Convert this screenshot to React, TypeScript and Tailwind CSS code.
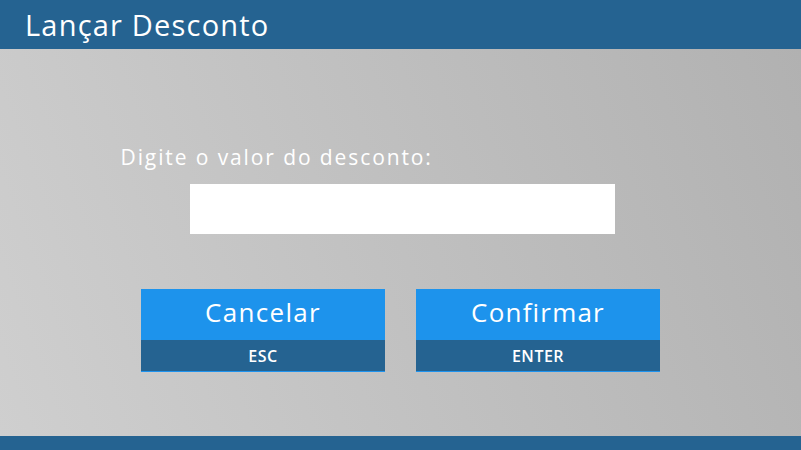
export default function App() {
  return (
    <div
      className="w-[801px] h-[450px] flex flex-col overflow-hidden"
      style={{ fontFamily: '"Open Sans", "Liberation Sans", sans-serif' }}
    >
      <header className="h-[49px] bg-[#256391] flex items-center pl-[25px] shrink-0">
        <h1 className="text-white text-[29px] leading-none tracking-[1.2px] pb-[1px]">Lançar Desconto</h1>
      </header>

      <main className="flex-1 bg-[linear-gradient(70deg,#cfcfcf,#b1b1b1)] pt-[94px]">
        <div className="w-[560px] mx-auto">
          <label className="block text-white text-[21px] leading-[28px] h-[28px] tracking-[1.9px]">
            Digite o valor do desconto:
          </label>
          <input
            type="text"
            className="block mt-[13px] ml-[69px] w-[425px] h-[50px] bg-white outline-none px-3 text-xl"
          />
          <div className="mt-[55px] flex justify-center gap-[31px]">
            <button className="w-[244px] flex flex-col text-white border-b border-[#1e93ee]">
              <span className="h-[51px] bg-[#1d93ec] flex items-center justify-center text-[26px] tracking-[1.3px] pb-[5px]">
                Cancelar
              </span>
              <span className="h-[31px] bg-[#256391] flex items-center justify-center text-[16px] font-semibold tracking-[0.5px] pt-[1px]">
                ESC
              </span>
            </button>
            <button className="w-[244px] flex flex-col text-white border-b border-[#1e93ee]">
              <span className="h-[51px] bg-[#1d93ec] flex items-center justify-center text-[26px] tracking-[1.2px] pb-[5px]">
                Confirmar
              </span>
              <span className="h-[31px] bg-[#256391] flex items-center justify-center text-[16px] font-semibold tracking-[0.5px] pt-[1px]">
                ENTER
              </span>
            </button>
          </div>
        </div>
      </main>

      <footer className="h-[14px] bg-[#256391] shrink-0" />
    </div>
  );
}
